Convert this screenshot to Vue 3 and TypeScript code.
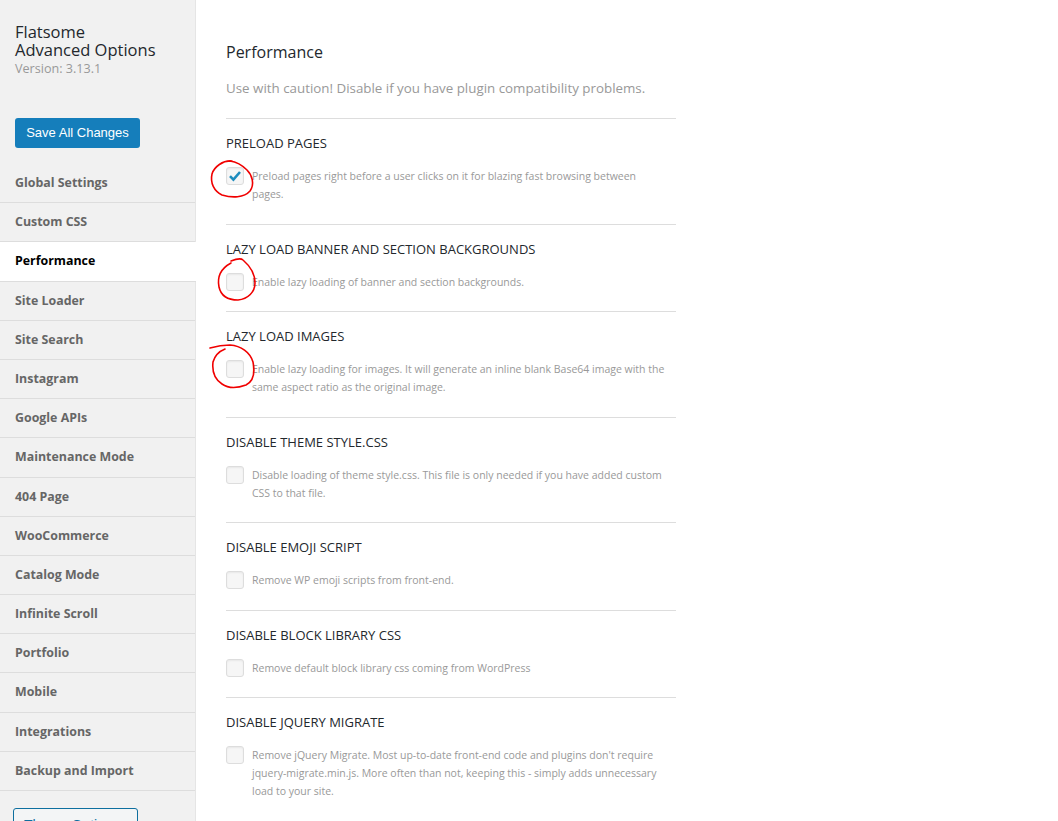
<script setup lang="ts">
interface Opt { title: string; text: string; checked?: boolean }
const nav: string[] = ['Global Settings','Custom CSS','Performance','Site Loader','Site Search','Instagram','Google APIs','Maintenance Mode','404 Page','WooCommerce','Catalog Mode','Infinite Scroll','Portfolio','Mobile','Integrations','Backup and Import']
const options: Opt[] = [
  { title: 'Preload Pages', checked: true, text: 'Preload pages right before a user clicks on it for blazing fast browsing between pages.' },
  { title: 'Lazy Load Banner and Section Backgrounds', text: 'Enable lazy loading of banner and section backgrounds.' },
  { title: 'Lazy Load Images', text: 'Enable lazy loading for images. It will generate an inline blank Base64 image with the same aspect ratio as the original image.' },
  { title: 'Disable Theme Style.css', text: 'Disable loading of theme style.css. This file is only needed if you have added custom CSS to that file.' },
  { title: 'Disable Emoji Script', text: 'Remove WP emoji scripts from front-end.' },
  { title: 'Disable Block Library CSS', text: 'Remove default block library css coming from WordPress' },
  { title: 'Disable jQuery Migrate', text: "Remove jQuery Migrate. Most up-to-date front-end code and plugins don't require jquery-migrate.min.js. More often than not, keeping this - simply adds unnecessary load to your site." },
]
</script>

<template>
  <div class="page">
    <aside class="side">
      <h1 class="brand">Flatsome<br>Advanced Options</h1>
      <div class="version">Version: 3.13.1</div>
      <button class="save">Save All Changes</button>
      <ul class="nav">
        <li v-for="n in nav" :key="n" :class="{ active: n === 'Performance' }">{{ n }}</li>
      </ul>
      <button class="theme">Theme Options</button>
    </aside>
    <main class="main">
      <h2 class="heading">Performance</h2>
      <p class="intro">Use with caution! Disable if you have plugin compatibility problems.</p>
      <section v-for="o in options" :key="o.title" class="opt">
        <h3 class="opt-title">{{ o.title }}</h3>
        <div class="opt-row">
          <span class="box">
            <svg v-if="o.checked" viewBox="0 0 16 16" width="16" height="16"><path d="M3 8.2 6.4 11.6 13 4" fill="none" stroke="#1e8cbe" stroke-width="2.6"/></svg>
          </span>
          <p class="desc">{{ o.text }}</p>
        </div>
      </section>
    </main>
    <svg class="marks" width="1058" height="821" viewBox="0 0 1058 821">
      <path d="M232 161C223 160 214 167 212 174C210 183 214 191 222 195C232 198 244 198 250 191C255 184 252 175 247 170C242 165 237 162 230 161" />
      <path d="M231 261C236 259 241 258 243 260C250 266 255 274 255 283C255 292 248 299 238 300C228 300 221 296 219 287C217 277 220 269 231 263" />
      <path d="M210 348C217 346 223 345 230 345C241 346 250 352 253 362C255 372 254 381 246 385C238 388 229 389 222 384C214 379 212 371 213 362C215 355 220 351 225 349" />
    </svg>
  </div>
</template>

<style>
html, body { margin: 0; background: #fff; overflow: hidden; }
</style>

<style scoped>
.page { position: relative; width: 1058px; height: 821px; overflow: hidden; display: flex; font-family: "Open Sans", "Noto Sans", sans-serif; background: #fff; }
.side { width: 195px; flex: none; height: 821px; background: #f1f1f1; border-right: 1px solid #e5e5e5; padding-top: 23px; box-sizing: content-box; }
.brand { margin: 0 0 0 15px; font-size: 16.5px; line-height: 18px; font-weight: 500; color: #23282d; }
.version { margin: 1px 0 0 15px; font-size: 12.6px; line-height: 18px; color: #999; }
.save { display: block; margin: 40px 0 0 15px; width: 125px; height: 30px; padding: 0; border: 0; border-radius: 3px; background: #157ebb; color: #fff; font: 400 13px/28px "Liberation Sans", Arial, sans-serif; }
.nav { list-style: none; margin: 16px 0 0; padding: 0; }
.nav li { box-sizing: border-box; height: 39.2px; line-height: 38.8px; padding-left: 15px; font-size: 12.4px; font-weight: 700; color: #666; border-bottom: 1px solid #ddd; }
.nav li.active { background: #fff; color: #000; width: 196px; position: relative; }
.theme { display: block; box-sizing: border-box; margin: 17px 0 0 13px; width: 125px; height: 34px; padding: 0 0 0 10px; text-align: left; border: 1px solid #0e6f9f; border-radius: 3px; background: #f3f5f6; color: #0e6f9f; font: 400 14px/32px "Liberation Sans", Arial, sans-serif; }
.main { width: 450px; margin-left: 30px; padding-top: 42px; }
.heading { margin: 0; font-size: 16px; line-height: 20px; font-weight: 500; color: #23282d; }
.intro { margin: 16px 0 0; font-size: 13.35px; line-height: 20px; color: #999; padding-bottom: 20px; }
.opt { border-top: 1px solid #ddd; padding: 16px 0 20.5px; }
.opt-title { margin: 0; font-size: 13px; line-height: 17px; font-weight: 400; text-transform: uppercase; color: #23282d; }
.opt-row { display: flex; gap: 8px; margin-top: 15px; }
.box { flex: none; width: 16px; height: 16px; border: 1px solid #ddd; border-radius: 3px; background: #f6f6f6; box-shadow: inset 0 1px 2px rgba(0,0,0,.06); display: block; }
.box svg { display: block; }
.desc { margin: 0; width: 414px; font-size: 10.5px; line-height: 18px; color: #999; }
.marks { position: absolute; left: 0; top: 0; pointer-events: none; }
.marks path { fill: none; stroke: #f00000; stroke-width: 1.6; stroke-linecap: round; }
</style>
